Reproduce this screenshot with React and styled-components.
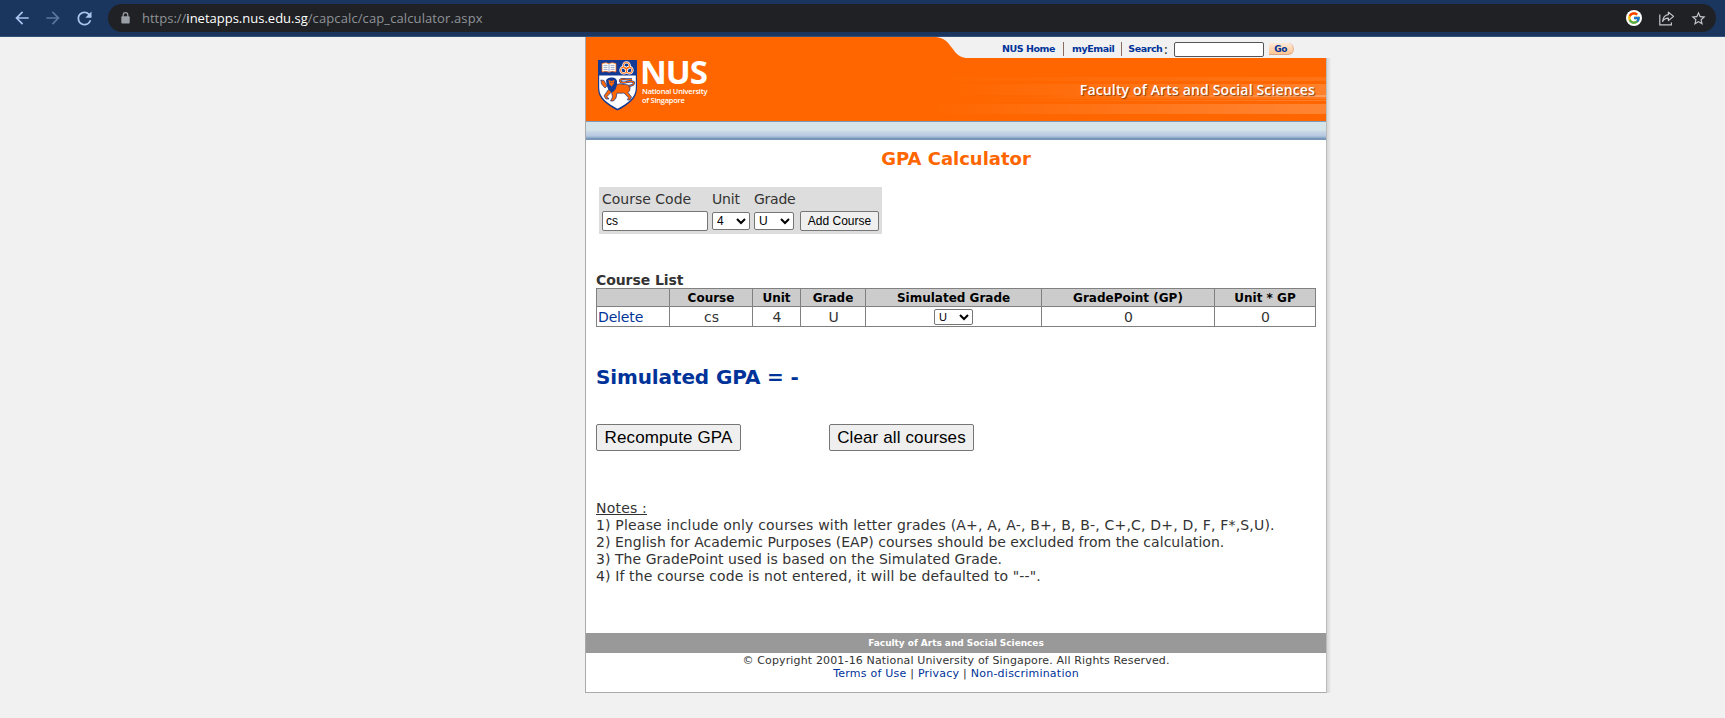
import React from "react";
import styled, { createGlobalStyle } from "styled-components";
import { MdArrowBack, MdArrowForward, MdRefresh, MdStarBorder } from "react-icons/md";
import { FcGoogle } from "react-icons/fc";

const verdana = `"DejaVu Sans", Verdana, sans-serif`;
const arial = `"Liberation Sans", Arial, sans-serif`;
const humanist = `"Open Sans", "Noto Sans", sans-serif`;
const orange = "#ff6600";
const navy = "#003399";

const GlobalStyle = createGlobalStyle`
  * { box-sizing: border-box; }
  body { margin: 0; background: #f1f1f1; color: #333; font: 14px/17px ${verdana}; }
  a { color: ${navy}; text-decoration: none; }
`;

/* Browser toolbar */
const Toolbar = styled.div`
  display: flex;
  align-items: flex-start;
  height: 37px;
  padding: 4px 9px 0 12px;
  background: #1a355e;
  border-bottom: 1px solid #33517d;
`;
const NavIcons = styled.div`
  display: flex;
  align-items: center;
  gap: 11px;
  width: 96px;
  height: 28px;
  color: #a9c4ee;
`;
const NavIcon = styled.span`
  display: flex;
  opacity: ${(p) => (p.$dim ? 0.45 : 1)};
`;
const AddressBar = styled.div`
  flex: 1;
  display: flex;
  align-items: center;
  height: 28px;
  padding: 0 9px 0 13px;
  border-radius: 14px;
  background: #202124;
  color: #9aa0a6;
`;
const Url = styled.div`
  flex: 1;
  margin-left: 12px;
  font: 13px/28px ${humanist};
  color: #8f9398;
  b { font-weight: 400; color: #fff; }
  span { letter-spacing: 0.11px; }
`;
const BarIcons = styled.div`
  display: flex;
  align-items: center;
  gap: 15px;
  color: #c4c7cc;
`;
const GoogleBadge = styled.span`
  display: flex;
  align-items: center;
  justify-content: center;
  width: 16px;
  height: 16px;
  margin-right: 2px;
  border-radius: 50%;
  background: #fff;
`;

/* Page frame */
const Frame = styled.div`
  display: flex;
  width: 746px;
  height: 656px;
  margin-left: 585px;
`;
const Main = styled.main`
  width: 741px;
  border-left: 1px solid #aaa;
  border-bottom: 1px solid #aaa;
`;
const EdgeShadow = styled.div`
  width: 5px;
  margin-top: 21px;
  background: linear-gradient(90deg, #bcbcbc 0 1px, #d9d9d9 1px 2px, #dedede 2px 3px, #e5e5e5 3px 4px, #ececec 4px);
`;

/* Header */
const Header = styled.header`
  display: grid;
  grid-template-columns: 346px 34px 1fr;
  grid-template-rows: 21px 63px;
`;
const Brand = styled.div`
  grid-row: 1 / 3;
  display: flex;
  align-items: flex-start;
  gap: 5px;
  padding: 23px 0 0 12px;
  background: ${orange};
`;
const Wordmark = styled.div`
  color: #fff;
  white-space: nowrap;
  font: 600 7.5px/9px ${humanist};
  letter-spacing: -0.24px;
`;
const Initials = styled.div`
  margin: -2px 0 2px -2px;
  font-size: 33px;
  font-weight: 700;
  line-height: 27px;
  letter-spacing: -1px;
`;
const Menu = styled.nav`
  display: flex;
  align-items: center;
  padding: 3px 0 0 36px;
  white-space: nowrap;
  font: bold 9.5px/16px ${verdana};
  letter-spacing: -0.45px;
`;
const Rule = styled.i`
  width: 1px;
  height: 14px;
  margin: 0 ${(p) => p.$after}px 0 ${(p) => p.$before}px;
  background: #8a6d5e;
`;
const Colon = styled.span`
  margin-left: 1px;
  color: #333;
  font: 14px/14px ${verdana};
`;
const SearchInput = styled.input`
  width: 90px;
  height: 15px;
  margin: 0 5px 0 6px;
  padding: 0;
  border: 1px solid #555;
  border-radius: 2px;
  background: #fff;
`;
const Go = styled.button`
  width: 25px;
  height: 12px;
  padding: 0;
  border: 0;
  border-bottom: 1px solid #d9a985;
  border-right: 1px solid #e5b48e;
  border-radius: 0 6px 6px 0;
  background: linear-gradient(#ffe9d6, #ffc592);
  color: ${navy};
  font: bold 9px/10px ${verdana};
  letter-spacing: -0.3px;
`;
const Banner = styled.div`
  grid-column: 2 / 4;
  display: flex;
  justify-content: flex-end;
  padding: 18px 11px 0 0;
  color: #fff;
  font: 600 14px/27px ${humanist};
  letter-spacing: 0.147px;
  text-shadow: 1px 1px 1px rgba(90, 40, 0, 0.75);
  background:
    linear-gradient(90deg, transparent, rgba(255, 255, 255, 0.09)) 0 19px / 100% 4px no-repeat,
    linear-gradient(90deg, transparent 5%, rgba(255, 255, 255, 0.17)) 0 26px / 100% 11px no-repeat,
    linear-gradient(90deg, transparent 25%, rgba(255, 255, 255, 0.36)) 0 37px / 100% 2px no-repeat,
    linear-gradient(90deg, transparent 10%, rgba(255, 255, 255, 0.13)) 0 39px / 100% 2px no-repeat,
    linear-gradient(90deg, transparent 10%, rgba(255, 255, 255, 0.16)) 0 42px / 100% 1px no-repeat,
    linear-gradient(90deg, transparent, rgba(255, 255, 255, 0.2)) 0 46px / 100% 10px no-repeat,
    ${orange};
`;
const BlueStrip = styled.div`
  height: 19px;
  border-top: 1px solid #7b9cb8;
  border-bottom: 2px solid #7896b8;
  background: linear-gradient(#d5e4e8 0 50%, #c7d6e6 62%, #b5c6e0 90%, #93aecb 92%);
`;

/* Content */
const Content = styled.div`
  height: 493px;
  padding: 8px 10px 0;
  background: #fff;
`;
const Title = styled.h1`
  margin: 0;
  text-align: center;
  color: ${orange};
  font: bold 18px/22px ${verdana};
`;
const EntryForm = styled.div`
  display: grid;
  grid-template-columns: 106px 38px 40px 79px;
  grid-template-rows: 18px 20px;
  column-gap: 4px;
  row-gap: 3px;
  align-items: center;
  width: 283px;
  margin: 17px 0 0 3px;
  padding: 3px;
  background: #ddd;
`;
const Label = styled.label`
  line-height: 18px;
  letter-spacing: ${(p) => p.$tight || 0}px;
`;
const CodeInput = styled.input`
  width: 106px;
  height: 20px;
  padding: 1px 3px;
  border: 1px solid #767676;
  border-radius: 2px;
  font: 12px ${arial};
`;
const Select = styled.select`
  width: ${(p) => p.$w}px;
  height: ${(p) => p.$h}px;
  padding: 0;
  border: 1px solid #767676;
  border-radius: 2px;
  background-color: #fff;
  color: #000;
  font: ${(p) => p.$size}px ${arial};
`;
const Button = styled.button`
  height: ${(p) => (p.$large ? 27 : 20)}px;
  width: ${(p) => (p.$large ? 145 : 79)}px;
  margin-left: ${(p) => (p.$large ? 0 : 2)}px;
  padding: 0;
  border: 1px solid #767676;
  border-radius: 2px;
  background: #efefef;
  color: #000;
  white-space: nowrap;
  font: ${(p) => (p.$large ? 17 : 12)}px ${arial};
  letter-spacing: ${(p) => (p.$large ? 0.12 : 0)}px;
`;
const ListTitle = styled.h2`
  height: 17px;
  margin: 37px 0 0;
  font: bold 14px/18px ${verdana};
  letter-spacing: -0.08px;
`;
const Grid = styled.div`
  display: grid;
  grid-template-columns: 72px 82px 47px 64px 175px 172px 100px;
  grid-template-rows: 17px 19px;
  gap: 1px;
  padding: 1px;
  width: 720px;
  background: #808080;
`;
const HeadCell = styled.div`
  height: 17px;
  background: #ccc;
  color: #000;
  text-align: center;
  font: bold 12px/18px ${verdana};
`;
const Cell = styled.div`
  display: flex;
  align-items: center;
  justify-content: ${(p) => (p.$left ? "flex-start" : "center")};
  height: 19px;
  padding: ${(p) => (p.$control ? 0 : 1)}px 0 0 ${(p) => (p.$control ? 0 : 1)}px;
  background: #fff;
  line-height: 20px;
  letter-spacing: ${(p) => (p.$left ? -0.15 : 0)}px;
`;
const Result = styled.h2`
  margin: 38px 0 0;
  color: ${navy};
  font: bold 20px/24px ${verdana};
  letter-spacing: -0.12px;
`;
const Actions = styled.div`
  display: flex;
  gap: 88px;
  margin-top: 35px;
`;
const Notes = styled.div`
  margin-top: 49px;
  white-space: nowrap;
`;
const Note = styled.div`
  line-height: 17px;
  letter-spacing: ${(p) => p.$track || 0}px;
`;

/* Footer */
const FooterBar = styled.div`
  background: #999;
  color: #fff;
  text-align: center;
  font: bold 9px/20px ${verdana};
  letter-spacing: -0.04px;
`;
const Legal = styled.footer`
  height: 39px;
  padding-top: 1px;
  background: #fff;
  text-align: center;
  font: 11px/13px ${verdana};
  letter-spacing: 0.15px;
`;
const LegalLinks = styled.div`
  letter-spacing: 0.235px;
`;

const LockIcon = () => (
  <svg width="9" height="12" viewBox="0 0 9 12">
    <path d="M2.2 5V3A2.3 2.3 0 0 1 6.8 3V5" fill="none" stroke="currentColor" strokeWidth="1.2" />
    <rect x="0.3" y="4.3" width="8.4" height="7.2" rx="0.9" fill="currentColor" />
  </svg>
);

const ShareIcon = () => (
  <svg width="16" height="15" viewBox="0 0 16 15" fill="none" stroke="currentColor" strokeWidth="1.2">
    <path d="M0.8 3.5V13.8H12.4V11.5" />
    <path d="M9.4 1.2L14.6 5.4L9.4 9.6V7.2C6.6 7.2 4.8 8.2 3.6 10.4C4 6.4 6 4 9.4 3.6Z" strokeLinejoin="round" />
  </svg>
);

const Crest = () => (
  <svg width="39" height="51" viewBox="0 0 39 51">
    <path d="M0 0H39V28C39 39 30 45 19.5 50.5C9 45 0 39 0 28Z" fill="#123a94" />
    <path d="M1.2 15.5H37.8V28C37.8 38 29 43.5 19.5 48.8C10 43.5 1.2 38 1.2 28Z" fill="#fff" />
    <path d="M4 3.6Q8 2 11 3.6Q14 2 18 3.6V12Q14 10.6 11 12.2Q8 10.6 4 12Z" fill="#fff" stroke={orange} strokeWidth="0.7" />
    <path d="M11 3.6V12M5.5 5.4H9.5M5.5 7.4H9.5M5.5 9.4H9.5M12.5 5.4H16.5M12.5 7.4H16.5M12.5 9.4H16.5" stroke="#7384b2" strokeWidth="0.7" />
    <g fill="none" stroke="#fff" strokeWidth="2.3">
      <circle cx="28.5" cy="5.6" r="3.2" /><circle cx="25.7" cy="10.2" r="3.2" /><circle cx="31.3" cy="10.2" r="3.2" />
    </g>
    <g fill="none" stroke={orange} strokeWidth="1">
      <circle cx="28.5" cy="5.6" r="3.2" /><circle cx="25.7" cy="10.2" r="3.2" /><circle cx="31.3" cy="10.2" r="3.2" />
    </g>
    <g stroke="#123a94" strokeWidth="0.7" fill={orange}>
      <path d="M16 25Q22 23 27 24.5Q31 24 32 27Q32.5 31 30 32.5L33.5 37L32 40H29.5L30.3 37.5L26 33Q21 33.5 19 33L18 38L15.5 41H12.5L14.5 37L13.5 32L9 36.5L11 39H8L6 36L10 30Z" />
      <path d="M2.8 20L6 20.5L9 26L7 28L3.5 24Z" />
      <path d="M30.5 26Q36.5 25.5 35.8 22.5Q34.5 20.5 29 22Q23 23.5 22 21Q22 18.5 27 19.2L34 19.5" fill="none" stroke="#123a94" strokeWidth="2.3" />
      <path d="M30.5 26Q36.5 25.5 35.8 22.5Q34.5 20.5 29 22Q23 23.5 22 21Q22 18.5 27 19.2L34 19.5" fill="none" stroke={orange} strokeWidth="1.1" />
    </g>
    <path d="M8 20Q10 17 13.5 17.5Q18 17 19 21Q19.5 27 16.5 30.5Q14.5 33 13 32Q8.5 29 8 20Z" fill="#123a94" />
    <path d="M10.5 20L13.5 21L16.5 20L15.7 24L13.6 26.5L11.2 24Z" fill={orange} />
    <path d="M12 22.3H13M14.3 22.3H15.3" stroke="#123a94" strokeWidth="0.8" />
  </svg>
);

const TabCurve = () => (
  <svg width="34" height="21" viewBox="0 0 34 21">
    <path d="M0 0H4C20 1 20 20 34 21H0Z" fill={orange} />
  </svg>
);

const headings = ["", "Course", "Unit", "Grade", "Simulated Grade", "GradePoint (GP)", "Unit * GP"];
const notes = [
  ["1) Please include only courses with letter grades (A+, A, A-, B+, B, B-, C+,C, D+, D, F, F*,S,U).", 0.185],
  ["2) English for Academic Purposes (EAP) courses should be excluded from the calculation.", 0.045],
  ["3) The GradePoint used is based on the Simulated Grade.", 0.05],
  ['4) If the course code is not entered, it will be defaulted to "--".', 0.13],
];

export default function App() {
  return (
    <>
      <GlobalStyle />
      <Toolbar>
        <NavIcons>
          <NavIcon><MdArrowBack size={20} /></NavIcon>
          <NavIcon $dim><MdArrowForward size={20} /></NavIcon>
          <NavIcon><MdRefresh size={21} /></NavIcon>
        </NavIcons>
        <AddressBar>
          <LockIcon />
          <Url>https://<b>inetapps.nus.edu.sg</b><span>/capcalc/cap_calculator.aspx</span></Url>
          <BarIcons>
            <GoogleBadge><FcGoogle size={14} /></GoogleBadge>
            <ShareIcon />
            <MdStarBorder size={17} />
          </BarIcons>
        </AddressBar>
      </Toolbar>
      <Frame>
        <Main>
          <Header>
            <Brand>
              <Crest />
              <Wordmark>
                <Initials>NUS</Initials>
                <div>National University</div>
                <div>of Singapore</div>
              </Wordmark>
            </Brand>
            <TabCurve />
            <Menu>
              <a href="#home">NUS Home</a>
              <Rule $before={8} $after={8} />
              <a href="#email">myEmail</a>
              <Rule $before={7} $after={6} />
              <a href="#search">Search</a>
              <Colon>:</Colon>
              <SearchInput />
              <Go>Go</Go>
            </Menu>
            <Banner>Faculty of Arts and Social Sciences</Banner>
          </Header>
          <BlueStrip />
          <Content>
            <Title>GPA Calculator</Title>
            <EntryForm>
              <Label>Course Code</Label>
              <Label $tight={-0.15}>Unit</Label>
              <Label $tight={-0.25}>Grade</Label>
              <span />
              <CodeInput defaultValue="cs" />
              <Select $w={38} $h={18} $size={12}><option>4</option></Select>
              <Select $w={40} $h={18} $size={12}><option>U</option></Select>
              <Button>Add Course</Button>
            </EntryForm>
            <ListTitle>Course List</ListTitle>
            <Grid>
              {headings.map((h, i) => <HeadCell key={i}>{h}</HeadCell>)}
              <Cell $left><a href="#delete">Delete</a></Cell>
              <Cell>cs</Cell>
              <Cell>4</Cell>
              <Cell>U</Cell>
              <Cell $control><Select $w={39} $h={16} $size={11}><option>U</option></Select></Cell>
              <Cell>0</Cell>
              <Cell>0</Cell>
            </Grid>
            <Result>Simulated GPA = -</Result>
            <Actions>
              <Button $large>Recompute GPA</Button>
              <Button $large>Clear all courses</Button>
            </Actions>
            <Notes>
              <Note $track={0.2}><u>Notes :</u></Note>
              {notes.map(([text, track]) => <Note key={text} $track={track}>{text}</Note>)}
            </Notes>
          </Content>
          <FooterBar>Faculty of Arts and Social Sciences</FooterBar>
          <Legal>
            © Copyright 2001-16 National University of Singapore. All Rights Reserved.
            <LegalLinks>
              <a href="#terms">Terms of Use</a> | <a href="#privacy">Privacy</a> | <a href="#nd">Non-discrimination</a>
            </LegalLinks>
          </Legal>
        </Main>
        <EdgeShadow />
      </Frame>
    </>
  );
}
